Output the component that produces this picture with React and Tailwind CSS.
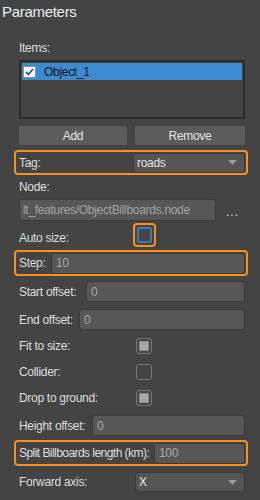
import React from "react";

const font = { fontFamily: '"Liberation Sans", Arial, sans-serif' };

function Field({ value, dim = true }) {
  return (
    <div className="flex-1 h-full bg-[#575757] border border-[#3a3a3a] rounded-[3px] flex items-center px-[4px]">
      <span className={dim ? "text-[#a9a9a9]" : "text-[#e2e2e2]"}>{value}</span>
    </div>
  );
}

function Select({ value }) {
  return (
    <div className="flex-1 h-full bg-[#555555] border border-[#3a3a3a] rounded-[3px] flex items-center pl-[3px] pr-[7px]">
      <span className="flex-1 text-[#e4e4e4]">{value}</span>
      <svg width="9" height="5" viewBox="0 0 9 5">
        <path d="M0 0 H9 L4.5 5 Z" fill="#9a9a9a" />
      </svg>
    </div>
  );
}

function Check({ filled }) {
  return (
    <div className="w-[16px] h-[16px] rounded-[3px] border border-[#747474] bg-[#464646] flex items-center justify-center">
      {filled && <div className="w-[10px] h-[10px] rounded-[1px] bg-[#a7a7a7] border border-[#8a8a8a]" />}
    </div>
  );
}

function Row({ label, w, h, mt, hi, tight, children }) {
  const box = hi
    ? "ml-[-5px] mr-[-3px] pl-[3px] pr-[1px] border-2 border-[#f7901e] rounded-[4px]"
    : "";
  return (
    <div className={`flex items-center ${box}`} style={{ height: h, marginTop: mt }}>
      <div
        className={`shrink-0 whitespace-nowrap text-[#dedede] ${tight ? "tracking-[-0.55px]" : ""}`}
        style={{ width: w }}
      >
        {label}
      </div>
      {children}
    </div>
  );
}

export default function App() {
  return (
    <div className="w-[260px] h-[500px] bg-[#444444] text-[12px] tracking-[-0.3px] overflow-hidden" style={font}>
      <div className="h-[24px] pl-[2px] pt-[1px] text-[15px] text-[#e8edf2] leading-[22px]">Parameters</div>

      <div className="pl-[19px] pr-[15px] flex flex-col">
        {/* Items list */}
        <div className="h-[16px] mt-[16px] flex items-center text-[#dedede]">Items:</div>
        <div className="h-[59px] mt-[4px] border-2 border-[#2b2b2b] bg-[#444444] p-[1px]">
          <div className="h-[17px] bg-[#3a8bd0] flex items-center pl-[1px]">
            <div className="w-[13px] h-[12px] bg-white border border-[#8d8d8d] flex items-center justify-center">
              <svg width="9" height="8" viewBox="0 0 9 8">
                <path d="M1 4 L3.5 6.5 L8 1" stroke="#2e4fa3" strokeWidth="1.8" fill="none" />
              </svg>
            </div>
            <span className="ml-[8px] text-[#111111]">Object_1</span>
          </div>
        </div>

        {/* Buttons */}
        <div className="h-[19px] mt-[7px] flex gap-[8px]">
          <button className="w-[108px] h-full bg-[#5c5c5c] rounded-[2px] text-[#e4e4e4]">Add</button>
          <button className="flex-1 h-full bg-[#5c5c5c] rounded-[2px] text-[#e4e4e4]">Remove</button>
        </div>

        <Row label="Tag:" w={114} h={25} mt={5} hi>
          <div className="flex-1 h-[20px]"><Select value="roads" /></div>
        </Row>

        <div className="h-[16px] mt-[4px] flex items-center text-[#dedede]">Node:</div>
        <div className="h-[22px] mt-[4px] flex items-center">
          <div className="w-[197px] h-full bg-[#575757] border border-[#3a3a3a] rounded-[3px] flex items-center px-[3px] text-[#a3a3a3] whitespace-nowrap overflow-hidden">
            lt_features/ObjectBillboards.node
          </div>
          <span className="ml-[10px] text-[#dedede] tracking-[1px] leading-none pt-[4px]">...</span>
        </div>

        <div className="flex items-center h-[24px] mt-[2px]">
          <div className="w-[114px] text-[#dedede] pt-[5px]">Auto size:</div>
          <div className="w-[23px] h-[24px] border-2 border-[#f7901e] rounded-[4px] flex items-center justify-center">
            <div className="w-[15px] h-[16px] rounded-[2px] border-2 border-[#3c7bb0] bg-[#464646]" />
          </div>
        </div>

        <Row label="Step:" w={32} h={26} mt={3} hi>
          <div className="flex-1 h-[21px]"><Field value="10" /></div>
        </Row>

        <Row label="Start offset:" w={67} h={21} mt={5}>
          <Field value="0" />
        </Row>
        <Row label="End offset:" w={60} h={21} mt={7}>
          <Field value="0" />
        </Row>

        <Row label="Fit to size:" w={117} h={16} mt={8}>
          <Check filled />
        </Row>
        <Row label="Collider:" w={117} h={16} mt={10}>
          <Check />
        </Row>
        <Row label="Drop to ground:" w={117} h={16} mt={10}>
          <Check filled />
        </Row>

        <Row label="Height offset:" w={73} h={21} mt={9}>
          <Field value="0" />
        </Row>

        <Row label="Split Billboards length (km):" w={135} h={26} mt={4} hi tight>
          <div className="flex-1 h-[21px]"><Field value="100" /></div>
        </Row>

        <Row label="Forward axis:" w={116} h={20} mt={6}>
          <Select value="X" />
        </Row>
      </div>
    </div>
  );
}
